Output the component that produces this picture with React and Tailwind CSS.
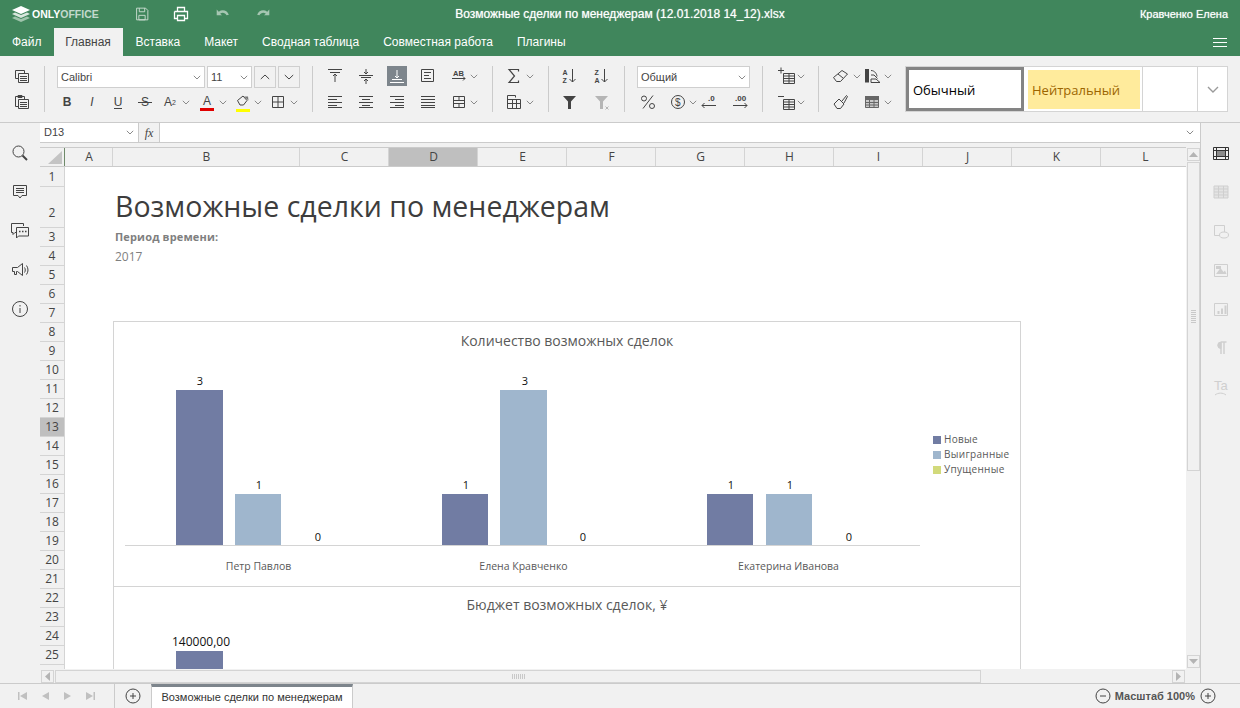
import React from "react";

const sans = "font-['Liberation_Sans',Arial,sans-serif]";
const sheetFont = "font-['Open_Sans','Noto_Sans',sans-serif]";

function Ico({ size = 20, className = "", children }) {
  return (
    <svg
      width={size}
      height={size}
      viewBox="0 0 20 20"
      fill="none"
      stroke="currentColor"
      strokeWidth="1"
      className={"shrink-0 " + className}
    >
      {children}
    </svg>
  );
}

function Chev({ className = "" }) {
  return (
    <svg width="8" height="5" viewBox="0 0 8 5" fill="none" stroke="#8a8a8a" className={"shrink-0 " + className}>
      <path d="M.8.8 4 4 7.2.8" />
    </svg>
  );
}

function Btn({ className = "", children }) {
  return <div className={"flex h-5 items-center justify-center text-[#444] " + className}>{children}</div>;
}

function Sep() {
  return <div className="h-[46px] w-px shrink-0 bg-[#cbcbcb]" />;
}

function Select({ className = "", children }) {
  return (
    <div className={"flex h-[22px] items-center justify-between border border-[#cfcfcf] bg-white pl-[3px] pr-[3px] text-[11px] text-[#444] " + className}>
      <span>{children}</span>
      <Chev />
    </div>
  );
}

const Lines = ({ rows }) => rows.map(([x1, x2, y]) => <path key={y + "-" + x1} d={`M${x1} ${y}H${x2}`} />);

const CopyIcon = () => (
  <Ico>
    <path d="M3.5 4.5h9v8h-9z" />
    <path d="M6.5 7.5h10v9h-10z" fill="#f1f1f1" />
    <Lines rows={[[8, 15, 10.5], [8, 15, 12.5], [8, 15, 14.5]]} />
  </Ico>
);
const PasteIcon = () => (
  <Ico>
    <path d="M3.5 4.5h9v10h-9z" />
    <path d="M6 3.5h4v2H6z" fill="#444" />
    <path d="M6.5 7.5h10v9h-10z" fill="#f1f1f1" />
    <Lines rows={[[8, 15, 10.5], [8, 15, 12.5], [8, 15, 14.5]]} />
  </Ico>
);
const AlignV = ({ kind }) => (
  <Ico>
    {kind === "top" && <path d="M3 3.5h14M5 6.5h10M10 16V8M8 10l2-2 2 2" />}
    {kind === "mid" && <path d="M3 9.5h14M5 11.5h10M10 3v5M8 6l2 2 2-2M10 18v-5M8 15l2-2 2 2" />}
    {kind === "bot" && <path d="M3 16.5h14M5 13.5h10M10 4v8M8 10l2 2 2-2" />}
  </Ico>
);
const AlignH = ({ kind }) => {
  const rows = {
    left: [[3, 17, 4.5], [3, 12, 7.5], [3, 17, 10.5], [3, 12, 13.5], [3, 17, 15.5]],
    center: [[3, 17, 4.5], [6, 14, 7.5], [3, 17, 10.5], [6, 14, 13.5], [3, 17, 15.5]],
    right: [[3, 17, 4.5], [8, 17, 7.5], [3, 17, 10.5], [8, 17, 13.5], [3, 17, 15.5]],
    just: [[3, 17, 4.5], [3, 17, 7.5], [3, 17, 10.5], [3, 17, 13.5], [3, 17, 15.5]],
  };
  return (
    <Ico>
      <Lines rows={rows[kind]} />
    </Ico>
  );
};
const WrapIcon = () => (
  <Ico>
    <path d="M3.5 3.5h12v12h-12z" />
    <Lines rows={[[6, 13, 6.5], [6, 11, 9.5], [6, 13, 12.5]]} />
  </Ico>
);
const AbIcon = () => (
  <Ico>
    <text x="4" y="9.500" fontSize="7.500" fontWeight="700" fill="currentColor" stroke="none" fontFamily="Liberation Sans">AB</text>
    <path d="M3 12.500h13M14 10.500l2 2-2 2" />
  </Ico>
);
const MergeIcon = () => (
  <Ico>
    <path d="M4.500 4.500h11v11h-11zM4.500 8.500h11M4.500 11.500h11M10 4.500v4M10 11.500v4" />
  </Ico>
);
const SigmaIcon = () => (
  <Ico>
    <path d="M14.500 5.500v-2H5L10.500 10 5 16.500h9.500v-2" strokeWidth="1.200" />
  </Ico>
);
const TableIcon = () => (
  <Ico>
    <path d="M3.500 3.500h8v2M3.500 3.500v13h13v-9h-13M8.500 7.500v9M12.500 7.500v9M3.500 11.500h13" />
  </Ico>
);
const SortIcon = ({ top, bottom }) => (
  <Ico>
    <text x="2.500" y="9" fontSize="7" fontWeight="700" fill="currentColor" stroke="none" fontFamily="Liberation Sans">{top}</text>
    <text x="2.500" y="16.500" fontSize="7" fontWeight="700" fill="currentColor" stroke="none" fontFamily="Liberation Sans">{bottom}</text>
    <path d="M12.500 3v13M9.500 13l3 3 3-3" />
  </Ico>
);
const FilterIcon = ({ color, x }) => (
  <Ico>
    <path d="M3 4h13l-5 5.500V17H8V9.500z" fill={color} stroke="none" />
    {x && <path d="M13.500 14.500l3 3M16.500 14.500l-3 3" stroke="#b5b5b5" />}
  </Ico>
);
const PercentIcon = () => (
  <Ico>
    <circle cx="6" cy="6.500" r="2.500" />
    <circle cx="14" cy="14" r="2.500" />
    <path d="M15 3.500 5 16.500" />
  </Ico>
);
const DollarIcon = () => (
  <Ico>
    <circle cx="10" cy="10" r="6.500" />
    <text x="7" y="13.500" fontSize="10" fill="currentColor" stroke="none" fontFamily="Liberation Sans">$</text>
  </Ico>
);
const DecIcon = ({ up }) => (
  <Ico>
    <text x={up ? "5" : "9"} y="9" fontSize="8" fontWeight="700" fill="currentColor" stroke="none" fontFamily="Liberation Sans">{up ? ".00" : ".0"}</text>
    {up ? <path d="M3 13.500h14M14.500 11l2.500 2.500-2.500 2.500" /> : <path d="M17 13.500H3M5.500 11 3 13.500 5.500 16" />}
  </Ico>
);
const CellIcon = ({ minus }) => (
  <Ico>
    <path d="M6.500 7.500h11v10h-11zM6.500 12.500h11M12 7.500v10M6.500 10h11M6.500 15h11" />
    <path d={minus ? "M1 4.500h6" : "M1 4.500h6M4 1.500v6"} />
  </Ico>
);
const Eraser = () => (
  <Ico>
    <path d="M2.500 11.500 11 4.500l5.500 3.500-7 7.500h-4z" strokeLinejoin="round" />
    <path d="M7 8l5 4" />
  </Ico>
);
const SchemeIcon = () => (
  <Ico>
    <path d="M3 3h4v13.500H3z" fill="#444" stroke="none" />
    <path d="M9 4.500c4 0 6 4 6 6M9 9h3l3.500 3.500M9 16.500h9l-4-3.500H9z" />
  </Ico>
);
const Brush = () => (
  <Ico>
    <path d="M3 12l5-5 5 5-3.500 4.500H6zM11 9l4.500-5.500 1 1L13 11" strokeLinejoin="round" />
  </Ico>
);
const TplIcon = () => (
  <Ico>
    <path d="M3 4h14v12H3z" fill="#c9c9c9" stroke="none" />
    <path d="M3 4h14v3H3z" fill="#666" stroke="none" />
    <path d="M3.500 4.500h13v11h-13zM3.500 7.500h13M3.500 10.500h13M3.500 13h13M7.500 4.500v11M12 4.500v11" stroke="#666" />
  </Ico>
);
const UndoShape = () => (
  <path d="M3 5v6.500h6L6.800 9.600c2.700-1.700 5.700-1 7.200 1.900l2.500-.800C14.500 6 9.500 4.500 5.300 7.400z" fill="currentColor" stroke="none" />
);

function TitleBar() {
  return (
    <div className="relative flex h-7 items-center text-white">
      <svg width="20" height="16" viewBox="0 0 20 16" className="ml-[11px] shrink-0">
        <path d="M10 0 19 4 10 8 1 4z" fill="#fff" />
        <path d="M4 6.500 1 8l9 4 9-4-3-1.500L10 9z" fill="#d8e6dd" />
        <path d="M4 10.500 1 12l9 4 9-4-3-1.500L10 13z" fill="#9fc4ac" />
      </svg>
      <div className={"ml-[1px] w-[67px] shrink-0 text-[10.500px] font-bold leading-none " + sans}>
        ONLY<span className="text-white/70">OFFICE</span>
      </div>
      <div className="ml-[34px] flex items-center">
        <Ico size={18} className="text-[#cfe0d5]">
          <path d="M4 3.500h10l2.500 2.500v10.500h-12.500zM7 3.500v4h6v-4M6.500 11.500h7v5h-7z" />
        </Ico>
        <Ico size={20} className="ml-[20px] text-white">
          <path d="M3.500 7.500h13v7h-3M6.500 14.500h-3v-7M6.500 3.500h7v4h-7zM6.500 11.500h7v5h-7z" strokeWidth="1.300" />
        </Ico>
        <Ico size={18} className="ml-[23px] text-[#a6c6b2]">
          <UndoShape />
        </Ico>
        <Ico size={18} className="ml-[22px] -scale-x-100 text-[#a6c6b2]">
          <UndoShape />
        </Ico>
      </div>
      <div className={"absolute inset-x-0 text-center text-xs [text-shadow:0_0_1px_rgba(255,255,255,0.7)] " + sans}>
        Возможные сделки по менеджерам (12.01.2018 14_12).xlsx
      </div>
      <div className={"ml-auto mr-[12px] text-[11px] [text-shadow:0_0_1px_rgba(255,255,255,0.7)] " + sans}>
        Кравченко Елена
      </div>
    </div>
  );
}

function Tabs() {
  return (
    <div className={"flex h-7 items-stretch pl-[12px] text-xs text-white " + sans}>
      <div className="flex items-center">Файл</div>
      <div className="ml-[12px] flex w-[69px] items-center justify-center bg-[#f1f1f1] text-[#444]">Главная</div>
      <div className="ml-[13px] flex items-center">Вставка</div>
      <div className="ml-[24px] flex items-center">Макет</div>
      <div className="ml-[24px] flex items-center">Сводная таблица</div>
      <div className="ml-[24px] flex items-center">Совместная работа</div>
      <div className="ml-[24px] flex items-center">Плагины</div>
      <div className="ml-auto mr-[13px] flex flex-col justify-center gap-[3px]">
        <div className="h-px w-[14px] bg-white" />
        <div className="h-px w-[14px] bg-white" />
        <div className="h-px w-[14px] bg-white" />
      </div>
    </div>
  );
}

function Ribbon() {
  return (
    <div className={"flex h-[67px] items-center border-b border-[#cbcbcb] bg-[#f1f1f1] " + sans}>
      <div className="flex w-[44px] shrink-0 flex-col gap-[6px] pl-[12px]">
        <Btn className="w-5"><CopyIcon /></Btn>
        <Btn className="w-5"><PasteIcon /></Btn>
      </div>
      <Sep />
      <div className="ml-[12px] flex w-[255px] shrink-0 flex-col gap-[4px]">
        <div className="flex gap-[2px]">
          <Select className="w-[148px]">Calibri</Select>
          <Select className="w-[45px]">11</Select>
          <div className="flex h-[22px] w-[22px] items-center justify-center border border-[#cfcfcf]">
            <svg width="10" height="6" viewBox="0 0 10 6" fill="none" stroke="#444"><path d="M.8 5 5 1l4.200 4" /></svg>
          </div>
          <div className="flex h-[22px] w-[22px] items-center justify-center border border-[#cfcfcf]">
            <svg width="10" height="6" viewBox="0 0 10 6" fill="none" stroke="#444"><path d="M.8 1 5 5l4.200-4" /></svg>
          </div>
        </div>
        <div className="flex items-center text-xs">
          <Btn className="w-5 font-bold">B</Btn>
          <Btn className="ml-[5px] w-5 italic">I</Btn>
          <Btn className="ml-[6px] w-5">
            <span className="border-b border-[#444] leading-[12px]">U</span>
          </Btn>
          <Btn className="relative ml-[7px] w-5">
            S<div className="absolute left-[3px] top-[10px] h-px w-[14px] bg-[#444]" />
          </Btn>
          <Btn className="ml-[5px] w-5">A<span className="self-end text-[7px] leading-[18px]">2</span></Btn>
          <Chev className="ml-[2px]" />
          <Btn className="relative ml-[7px] w-5 pb-[2px]">
            A<div className="absolute bottom-[1px] left-[3px] h-[3px] w-[14px] bg-[#e00000]" />
          </Btn>
          <Chev className="ml-[2px]" />
          <Btn className="relative ml-[6px] w-5">
            <Ico>
              <path d="M4.500 8.500 10 4l4 4.500-3.500 4.500H7z" />
              <path d="M11 4.500h4l.5 4" fill="#777" stroke="none" />
            </Ico>
            <div className="absolute bottom-0 left-[3px] h-[3px] w-[14px] bg-[#ffff00]" />
          </Btn>
          <Chev className="ml-[1px]" />
          <Btn className="ml-[6px] w-5">
            <Ico><path d="M4.500 4.500h11v11h-11zM10 4.500v11M4.500 10h11" /></Ico>
          </Btn>
          <Chev className="ml-[2px]" />
        </div>
      </div>
      <Sep />
      <div className="ml-[12px] flex w-[167px] shrink-0 flex-col gap-[6px]">
        <div className="flex items-center">
          <Btn className="w-5"><AlignV kind="top" /></Btn>
          <Btn className="ml-[11px] w-5"><AlignV kind="mid" /></Btn>
          <Btn className="ml-[11px] w-5 bg-[#7d858c] text-white"><AlignV kind="bot" /></Btn>
          <Btn className="ml-[11px] w-5"><WrapIcon /></Btn>
          <Btn className="ml-[11px] w-5"><AbIcon /></Btn>
          <Chev className="ml-[1px]" />
        </div>
        <div className="flex items-center">
          <Btn className="w-5"><AlignH kind="left" /></Btn>
          <Btn className="ml-[11px] w-5"><AlignH kind="center" /></Btn>
          <Btn className="ml-[11px] w-5"><AlignH kind="right" /></Btn>
          <Btn className="ml-[11px] w-5"><AlignH kind="just" /></Btn>
          <Btn className="ml-[11px] w-5"><MergeIcon /></Btn>
          <Chev className="ml-[1px]" />
        </div>
      </div>
      <Sep />
      <div className="ml-[11px] flex w-[44px] shrink-0 flex-col gap-[6px]">
        <div className="flex items-center">
          <Btn className="w-5"><SigmaIcon /></Btn>
          <Chev className="ml-[2px]" />
        </div>
        <div className="flex items-center">
          <Btn className="w-5"><TableIcon /></Btn>
          <Chev className="ml-[2px]" />
        </div>
      </div>
      <Sep />
      <div className="ml-[11px] flex w-[64px] shrink-0 flex-col gap-[6px]">
        <div className="flex items-center">
          <Btn className="w-5"><SortIcon top="A" bottom="Z" /></Btn>
          <Btn className="ml-[12px] w-5"><SortIcon top="Z" bottom="A" /></Btn>
        </div>
        <div className="flex items-center">
          <Btn className="w-5"><FilterIcon color="#444" /></Btn>
          <Btn className="ml-[12px] w-5"><FilterIcon color="#b5b5b5" x /></Btn>
        </div>
      </div>
      <Sep />
      <div className="ml-[12px] flex w-[125px] shrink-0 flex-col gap-[4px]">
        <Select className="w-[113px]">Общий</Select>
        <div className="flex items-center">
          <Btn className="ml-[1px] w-5"><PercentIcon /></Btn>
          <Btn className="ml-[10px] w-5"><DollarIcon /></Btn>
          <Chev className="ml-[1px]" />
          <Btn className="ml-[2px] w-5"><DecIcon /></Btn>
          <Btn className="ml-[11px] w-5"><DecIcon up /></Btn>
        </div>
      </div>
      <Sep />
      <div className="ml-[14px] flex w-[41px] shrink-0 flex-col gap-[6px]">
        <div className="flex items-center">
          <Btn className="w-5"><CellIcon /></Btn>
          <Chev />
        </div>
        <div className="flex items-center">
          <Btn className="w-5"><CellIcon minus /></Btn>
          <Chev />
        </div>
      </div>
      <Sep />
      <div className="ml-[12px] flex w-[74px] shrink-0 flex-col gap-[6px]">
        <div className="flex items-center">
          <Btn className="w-5"><Eraser /></Btn>
          <Chev className="ml-[2px]" />
          <Btn className="ml-[1px] w-5"><SchemeIcon /></Btn>
          <Chev className="ml-[2px]" />
        </div>
        <div className="flex items-center">
          <Btn className="w-5"><Brush /></Btn>
          <Btn className="ml-[11px] w-5"><TplIcon /></Btn>
          <Chev className="ml-[2px]" />
        </div>
      </div>
      <div className={"flex h-[46px] w-[323px] shrink-0 border border-[#d4d4d4] bg-white text-[13px] " + sheetFont}>
        <div className="flex w-[118px] items-center border-[3px] border-[#848484] pl-[4px] pt-[4px] text-black">Обычный</div>
        <div className="flex w-[119px] items-center border-r border-[#d4d4d4] pb-[2px] pl-[4px] pr-[2px] pt-[3px]">
          <div className="flex h-full w-full items-center bg-[#ffeb9c] pl-[4px] pt-[2px] text-[#9c6500]">Нейтральный</div>
        </div>
        <div className="w-[55px] border-r border-[#d4d4d4]" />
        <div className="flex flex-1 items-center justify-center">
          <svg width="12" height="7" viewBox="0 0 12 7" fill="none" stroke="#9a9a9a" strokeWidth="1.400"><path d="M1 1l5 5 5-5" /></svg>
        </div>
      </div>
    </div>
  );
}

function LeftRail() {
  return (
    <div className="flex w-10 shrink-0 flex-col items-center gap-[19px] pr-[1px] pt-[20px] text-[#444]">
      <Ico>
        <circle cx="8.500" cy="8.500" r="5.500" />
        <path d="M12.500 12.500 17 17" strokeWidth="2" />
      </Ico>
      <Ico>
        <path d="M3.500 3.500h13v10h-4.500l-2 2.500-2-2.500h-4.500zM6 6.500h8M6 8.500h8M6 10.500h8" />
      </Ico>
      <Ico>
        <path d="M13.500 5V2.500h-12v9h1.500v2l2-2h1" />
        <path d="M6.500 6.500h12v8.500h-10l-2 2z" />
        <path d="M9 10.500h1.500M12 10.500h1.500M15 10.500h1.500" strokeWidth="1.500" />
      </Ico>
      <Ico>
        <path d="M2.500 7.500h5l5-4v12l-5-4h-1v3h-2v-3h-2z" />
        <path d="M14.500 7.500c1 1.500 1 3.500 0 5M16.500 5.500c2 3 2 6 0 9" />
      </Ico>
      <Ico>
        <circle cx="10" cy="10" r="7.500" />
        <path d="M10 9v5M10 6v1.500" />
      </Ico>
    </div>
  );
}

function RightRail() {
  return (
    <div className="flex w-10 shrink-0 flex-col items-center gap-[19px] border-l border-[#cbcbcb] pt-[20px] text-[#cfcfcf]">
      <Ico className="text-[#333]">
        <path d="M5.500 7.500h9v6h-9z" fill="#8c8c8c" stroke="none" />
        <path d="M2.500 4.500h15v12h-15zM2.500 7.500h15M2.500 13.500h15M5.500 4.500v12M14.500 4.500v12" />
      </Ico>
      <Ico>
        <path d="M3 4h14v12H3z" fill="#e4e4e4" />
        <path d="M3 7h14M3 10h14M3 13h14M7.500 4v12M12.500 4v12" />
      </Ico>
      <Ico>
        <path d="M13.500 11V4.500h-10v10h5" />
        <ellipse cx="13" cy="14" rx="4.500" ry="3" />
      </Ico>
      <Ico>
        <path d="M3.500 4.500h13v12h-13z" />
        <path d="M5 14l4.500-6 3 4 1.500-1.500L15.500 14zM5 6h5v3H5z" fill="#cfcfcf" stroke="none" />
      </Ico>
      <Ico>
        <path d="M3.500 4.500h13v12h-13z" />
        <path d="M6.500 12h2v3h-2zM10 9.500h2V15h-2zM13.500 6.500h2V15h-2z" fill="#cfcfcf" stroke="none" />
      </Ico>
      <Ico>
        <path d="M10 4h5.500M10 4v12M13 4v12" strokeWidth="1.500" />
        <path d="M10 4a3.200 3.200 0 0 0 0 6.500z" fill="#cfcfcf" />
      </Ico>
      <Ico>
        <text x="3" y="13" fontSize="13" fill="currentColor" stroke="none" fontFamily="Liberation Sans">Ta</text>
        <path d="M4 18c3-2.500 8-2.500 11 0" />
      </Ico>
    </div>
  );
}

function FormulaBar() {
  return (
    <div className={"flex h-5 shrink-0 border-b border-[#cbcbcb] " + sans}>
      <div className="flex w-[98px] items-center justify-between bg-white pl-[4px] pr-[4px] text-[11px] text-[#444]">
        D13
        <Chev />
      </div>
      <div className="flex w-[22px] items-center justify-center border-x border-[#cbcbcb] font-['Liberation_Serif',serif] text-xs italic text-[#444]">
        fx
      </div>
      <div className="flex flex-1 items-center justify-end bg-white pr-[6px]">
        <Chev />
      </div>
    </div>
  );
}

const columns = [
  ["A", "w-[48px]"],
  ["B", "w-[187px]"],
  ["C", "w-[89px]"],
  ["D", "w-[89px]"],
  ["E", "w-[89px]"],
  ["F", "w-[89px]"],
  ["G", "w-[89px]"],
  ["H", "w-[89px]"],
  ["I", "w-[89px]"],
  ["J", "w-[89px]"],
  ["K", "w-[89px]"],
  ["L", "w-[89px]"],
];

function ColumnHeader() {
  return (
    <div className="flex h-[20px] shrink-0 overflow-hidden border-y border-[#cbcbcb] bg-[#f1f1f1] text-xs text-[#444]">
      <div className="flex w-[25px] shrink-0 items-end justify-end border-r border-[#6f8a6a] pb-[2px] pr-[2px]">
        <svg width="14" height="13" viewBox="0 0 14 13"><path d="M14 0v13H0z" fill="#c4c4c4" /></svg>
      </div>
      {columns.map(([name, w]) => (
        <div
          key={name}
          className={
            "flex shrink-0 items-center justify-center border-r border-[#d4d4d4] pl-[1px] " +
            w +
            (name === "D" ? " bg-[#bfbfbf]" : "")
          }
        >
          {name}
        </div>
      ))}
    </div>
  );
}

function RowHeader() {
  const rows = Array.from({ length: 26 }, (_, i) => i + 1);
  return (
    <div className="w-[25px] shrink-0 overflow-hidden bg-[#f1f1f1] text-xs text-[#444]">
      {rows.map((n) => (
        <div
          key={n}
          className={
            "flex w-full items-center justify-center border-b border-r border-[#d4d4d4] " +
            (n === 1 ? "h-[20px] " : n === 2 ? "h-[41px] pt-[12px] " : "h-[19px] ") +
            (n === 13 ? "bg-[#bfbfbf]" : "")
          }
        >
          {n < 26 ? n : ""}
        </div>
      ))}
    </div>
  );
}

const barDark = "#717ca3";
const barLight = "#9fb6cd";
const barYellow = "#d2da7b";

function Bar({ x, top, w, color, label, lx }) {
  return (
    <>
      <rect x={x} y={top} width={w} height={224 - top} fill={color} />
      <text x={lx} y={top - 5} textAnchor="middle" fontSize="11" fill="#111">{label}</text>
    </>
  );
}

function CountChart() {
  return (
    <svg width="908" height="266" viewBox="0 0 908 266" className="block" fontFamily="Open Sans">
      <path d="M.5 0V266M907.500 0V266M0 .5H908M0 265.500H908" stroke="#d4d4d4" fill="none" />
      <text x="454" y="25" textAnchor="middle" fontSize="14" fill="#595959">Количество возможных сделок</text>
      <Bar x={63} top={69} w={47} color={barDark} label="3" lx={87} />
      <Bar x={122} top={173} w={46} color={barLight} label="1" lx={146} />
      <text x={205} y={220} textAnchor="middle" fontSize="11" fill="#111">0</text>
      <Bar x={329} top={173} w={46} color={barDark} label="1" lx={353} />
      <Bar x={387} top={69} w={47} color={barLight} label="3" lx={412} />
      <text x={470} y={220} textAnchor="middle" fontSize="11" fill="#111">0</text>
      <Bar x={594} top={173} w={46} color={barDark} label="1" lx={618} />
      <Bar x={653} top={173} w={46} color={barLight} label="1" lx={677} />
      <text x={736} y={220} textAnchor="middle" fontSize="11" fill="#111">0</text>
      <path d="M12 224.500H807" stroke="#d4d4d4" />
      <g fontSize="10.500" fill="#595959" textAnchor="middle">
        <text x="145.500" y="249">Петр Павлов</text>
        <text x="410.500" y="249">Елена Кравченко</text>
        <text x="675.500" y="249">Екатерина Иванова</text>
      </g>
      <rect x="820" y="115" width="8" height="8" fill={barDark} />
      <rect x="820" y="130" width="8" height="8" fill={barLight} />
      <rect x="820" y="145" width="8" height="8" fill={barYellow} />
      <g fontSize="10" fill="#595959" letterSpacing=".3">
        <text x="831" y="122">Новые</text>
        <text x="831" y="137">Выигранные</text>
        <text x="831" y="152">Упущенные</text>
      </g>
    </svg>
  );
}

function BudgetChart() {
  return (
    <svg width="908" height="82" viewBox="0 0 908 82" className="block" fontFamily="Open Sans">
      <path d="M.5 0V82M907.500 0V82" stroke="#d4d4d4" fill="none" />
      <text x="454" y="23" textAnchor="middle" fontSize="14" fill="#595959">Бюджет возможных сделок, ¥</text>
      <text x="88" y="59" textAnchor="middle" fontSize="12" fill="#111">140000,00</text>
      <rect x="63" y="64" width="47" height="18" fill={barDark} />
    </svg>
  );
}

function SheetBody() {
  return (
    <div className={"min-w-0 flex-1 overflow-hidden bg-white pl-[48px] " + sheetFont}>
      <div className="h-[20px]" />
      <div className="flex h-[41px] items-center pb-[3px] pl-[2px] text-[28.500px] leading-none text-[#3d3d3d]">
        Возможные сделки по менеджерам
      </div>
      <div className="flex h-[19px] items-center pl-[2px] text-[11px] font-bold tracking-[0.15px] text-[#7f7f7f]">Период времени:</div>
      <div className="flex h-[19px] items-center pl-[2px] text-xs text-[#7f7f7f]">2017</div>
      <div className="h-[55px]" />
      <CountChart />
      <BudgetChart />
    </div>
  );
}

function ScrollBtn({ className = "", children }) {
  return (
    <div className={"flex items-center justify-center border border-[#d4d4d4] " + className}>
      {children}
    </div>
  );
}

function VScroll() {
  return (
    <div className="flex w-[14px] shrink-0 flex-col items-center bg-[#f1f1f1] pt-[1px]">
      <ScrollBtn className="h-[13px] w-[13px]">
        <svg width="9" height="5" viewBox="0 0 9 5"><path d="M4.500 0 9 5H0z" fill="#b4b4b4" /></svg>
      </ScrollBtn>
      <div className="mt-[1px] flex h-[309px] w-[13px] items-center justify-center border border-[#d4d4d4]">
        <div className="flex flex-col gap-px">
          {[0, 1, 2, 3, 4, 5, 6].map((i) => (
            <div key={i} className="h-px w-[5px] bg-[#c9c9c9]" />
          ))}
        </div>
      </div>
      <ScrollBtn className="mb-[1px] mt-auto h-[13px] w-[13px]">
        <svg width="9" height="5" viewBox="0 0 9 5"><path d="M4.500 5 9 0H0z" fill="#b4b4b4" /></svg>
      </ScrollBtn>
    </div>
  );
}

function HScroll() {
  return (
    <div className="flex h-[14px] shrink-0 items-center bg-[#f1f1f1] pl-[1px] pr-[15px]">
      <ScrollBtn className="h-[13px] w-[13px]">
        <svg width="5" height="9" viewBox="0 0 5 9"><path d="M0 4.500 5 0v9z" fill="#b4b4b4" /></svg>
      </ScrollBtn>
      <div className="ml-px flex h-[13px] w-[926px] items-center justify-center gap-px border border-[#d4d4d4]">
        {[0, 1, 2, 3, 4, 5, 6].map((i) => (
          <div key={i} className="h-[5px] w-px bg-[#c9c9c9]" />
        ))}
      </div>
      <ScrollBtn className="ml-auto h-[13px] w-[13px]">
        <svg width="5" height="9" viewBox="0 0 5 9"><path d="M5 4.500 0 0v9z" fill="#b4b4b4" /></svg>
      </ScrollBtn>
    </div>
  );
}

function Round({ minus, className = "" }) {
  return (
    <svg width="16" height="16" viewBox="0 0 16 16" fill="none" stroke="#444" className={"shrink-0 " + className}>
      <circle cx="8" cy="8" r="7" />
      <path d={minus ? "M5 8h6" : "M5 8h6M8 5v6"} />
    </svg>
  );
}

function StatusBar() {
  return (
    <div className={"flex h-[25px] shrink-0 items-stretch border-t border-[#cbcbcb] bg-[#f1f1f1] " + sans}>
      <div className="flex w-[115px] shrink-0 items-center gap-[15px] border-r border-[#cbcbcb] pl-[18px]">
        <svg width="9" height="8" viewBox="0 0 9 8" fill="#c0c0c0" className="shrink-0"><path d="M0 0h1.500v8H0zM9 0v8L2 4z" /></svg>
        <svg width="7" height="8" viewBox="0 0 7 8" fill="#c0c0c0" className="shrink-0"><path d="M7 0v8L0 4z" /></svg>
        <svg width="7" height="8" viewBox="0 0 7 8" fill="#c0c0c0" className="shrink-0"><path d="M0 0v8l7-4z" /></svg>
        <svg width="9" height="8" viewBox="0 0 9 8" fill="#c0c0c0" className="shrink-0"><path d="M7.500 0H9v8H7.500zM0 0v8l7-4z" /></svg>
      </div>
      <div className="flex w-[36px] shrink-0 items-center justify-center">
        <Round />
      </div>
      <div className="flex w-[202px] shrink-0 items-center justify-center border-x border-t-[3px] border-x-[#cbcbcb] border-t-[#7d858c] bg-white pb-[1px] text-[11px] text-[#333]">
        Возможные сделки по менеджерам
      </div>
      <div className="ml-auto flex items-center pr-[24px]">
        <Round minus />
        <div className="ml-[4px] mr-[5px] text-[11px] font-bold text-[#555]">Масштаб 100%</div>
        <Round />
      </div>
    </div>
  );
}

export default function App() {
  return (
    <div className="flex h-[708px] w-[1240px] flex-col overflow-hidden bg-[#f1f1f1]">
      <div className="shrink-0 bg-[#40865c]">
        <TitleBar />
        <Tabs />
      </div>
      <Ribbon />
      <div className="flex min-h-0 flex-1">
        <LeftRail />
        <div className="flex min-w-0 flex-1 flex-col">
          <FormulaBar />
          <div className="h-[4px] shrink-0" />
          <div className="flex min-h-0 flex-1">
            <div className={"flex min-w-0 flex-1 flex-col " + sheetFont}>
              <ColumnHeader />
              <div className="flex min-h-0 flex-1">
                <RowHeader />
                <SheetBody />
              </div>
            </div>
            <VScroll />
          </div>
          <HScroll />
        </div>
        <RightRail />
      </div>
      <StatusBar />
    </div>
  );
}
